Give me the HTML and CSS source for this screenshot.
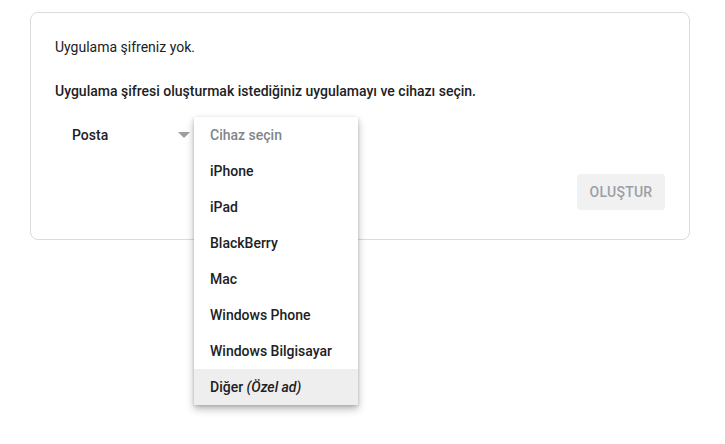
FILE: index.html
```html
<!DOCTYPE html>
<html lang="tr">
<head>
  <meta charset="UTF-8">
  <title>Uygulama şifreleri</title>
  <meta name="viewport" content="width=device-width, initial-scale=1.0">
  <link rel="stylesheet" href="styles.css">
</head>
<body>

<div class="page">
  <div class="card">
    <p class="note">Uygulama şifreniz yok.</p>
    <p class="lead">Uygulama şifresi oluşturmak istediğiniz uygulamayı ve cihazı seçin.</p>

    <div class="selects">
      <div class="select app">
        <span>Posta</span>
        <span class="arrow"></span>
      </div>
      <div class="select device">
        <ul class="menu">
          <li class="placeholder">Cihaz seçin</li>
          <li>iPhone</li>
          <li>iPad</li>
          <li>BlackBerry</li>
          <li>Mac</li>
          <li>Windows Phone</li>
          <li>Windows Bilgisayar</li>
          <li class="active">Diğer <em>(Özel ad)</em></li>
        </ul>
      </div>
    </div>

    <div class="actions">
      <button class="create" disabled>Oluştur</button>
    </div>
  </div>
</div>

</body>
</html>
```

FILE: styles.css
```css
html, body {
  height: 100%;
}
body {
  font-family: Roboto, 'Noto Sans', sans-serif;
  margin: 0;
  padding: 0;
  background: #fff;
  color: #202124;
  font-size: 14px;
}
.page {
  min-height: 444px;
  padding-top: 12px;
  box-sizing: border-box;
}
.card {
  margin-left: 30px;
  width: 660px;
  box-sizing: border-box;
  border: 1px solid #dadce0;
  border-radius: 8px;
  padding: 24px 24px 29px;
}
.note, .lead {
  margin: 0;
  line-height: 20px;
}
.lead {
  margin-top: 24px;
  font-weight: 500;
}
.selects {
  position: relative;
  z-index: 5;
  display: flex;
  margin-top: 16px;
  height: 36px;
}
.select {
  position: relative;
  display: flex;
  align-items: center;
  height: 36px;
}
.app {
  width: 118px;
  padding-left: 17px;
  font-weight: 500;
}
.arrow {
  position: absolute;
  right: 0;
  top: 15px;
  width: 0;
  height: 0;
  border-left: 6px solid transparent;
  border-right: 6px solid transparent;
  border-top: 6px solid #9e9e9e;
}
.device {
  margin-left: 4px;
  width: 164px;
}
.menu {
  position: absolute;
  left: 0;
  top: 0;
  width: 164px;
  margin: 0;
  padding: 0;
  list-style: none;
  background: #fff;
  box-shadow: 0 4px 8px rgba(0,0,0,0.28), 0 1px 3px rgba(0,0,0,0.15);
  z-index: 2;
}
.menu li {
  height: 36px;
  line-height: 36px;
  padding-left: 16px;
  font-weight: 500;
  white-space: nowrap;
}
.menu .placeholder {
  color: #80868b;
}
.menu .active {
  background: #eeeeee;
}
.menu em {
  font-weight: 500;
}
.actions {
  display: flex;
  justify-content: flex-end;
  margin-top: 21px;
}
.create {
  height: 36px;
  width: 88px;
  padding: 0;
  border: none;
  border-radius: 4px;
  background: #f1f1f1;
  color: #9aa0a6;
  font-family: Roboto, 'Noto Sans', sans-serif;
  font-size: 14px;
  font-weight: 500;
  letter-spacing: 0.25px;
  text-transform: uppercase;
}
```
